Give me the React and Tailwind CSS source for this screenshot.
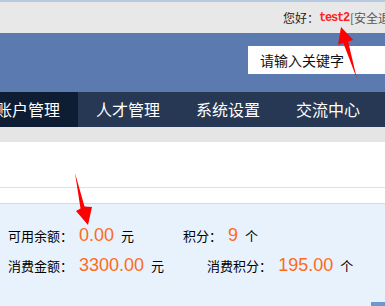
const cjk = { fontFamily: '"Noto Sans CJK SC", "Liberation Sans", sans-serif' }
const num = { fontFamily: '"Liberation Sans", Arial, sans-serif' }

const NAV = ['账户管理', '人才管理', '系统设置', '交流中心']

function Arrows() {
  return (
    <svg className="absolute left-0 top-0 pointer-events-none" width="385" height="306" viewBox="0 0 385 306">
      <polygon fill="#ff0000" points="341,27 353.3,40 348.1,41.6 357,79 343.3,43 338.1,44.7" />
      <polygon fill="#ff0000" points="75,173 84.5,206.5 92,207 88,225 76,211 80.5,208.5" />
    </svg>
  )
}

function Stat({ label, value, unit, ml = 0 }) {
  return (
    <div className="flex items-baseline" style={{ marginLeft: ml }}>
      <span className="text-[13px] text-black" style={cjk}>{label}</span>
      <span className="text-[18px] text-[#ff6a1a] ml-[6px]" style={num}>{value}</span>
      <span className="text-[13px] text-black ml-[7px]" style={cjk}>{unit}</span>
    </div>
  )
}

export default function App() {
  return (
    <div className="relative w-[385px] h-[306px] overflow-hidden bg-white flex flex-col" style={cjk}>
      <div className="h-[33px] shrink-0 border-t-2 border-[#b5c9e3] bg-[#e8e8e8] flex items-center pl-[283px] whitespace-nowrap">
        <span className="text-[12px] text-[#222]">您好：</span>
        <span className="text-[12px] font-bold text-[#ff2020] tracking-[-1.2px]" style={{ fontFamily: '"Liberation Mono", monospace' }}>test2</span>
        <span className="text-[12px] text-[#555] ml-[1px]">[安全退出]</span>
      </div>

      <div className="h-[59px] shrink-0 bg-[#5a7ab0] pt-[13px] pl-[248px]">
        <div className="w-[150px] h-[28px] bg-white pl-[12px] flex items-center text-[14px] text-[#111] whitespace-nowrap">
          请输入关键字
        </div>
      </div>

      <div className="h-[35px] shrink-0 bg-[#263853] flex ml-[-22px] whitespace-nowrap">
        {NAV.map((item, i) => (
          <div key={item} className={`px-[18px] leading-[35px] text-[16px] text-white ${i === 0 ? 'bg-[#0e1c34]' : ''}`}>
            {item}
          </div>
        ))}
      </div>

      <div className="h-[15px] shrink-0 bg-[#e5e5e5]" />
      <div className="h-[46px] shrink-0 bg-white border-b border-[#e1e1e1]" />
      <div className="h-[15px] shrink-0 bg-white" />

      <div className="flex-1 bg-[#e8f2fd] border-t border-[#c8dcf2] pt-[18px] pl-[8px] relative">
        <div className="h-[30px] flex items-baseline whitespace-nowrap">
          <Stat label="可用余额：" value="0.00" unit="元" />
          <Stat label="积分：" value="9" unit="个" ml={49} />
        </div>
        <div className="h-[30px] flex items-baseline whitespace-nowrap">
          <Stat label="消费金额：" value="3300.00" unit="元" />
          <Stat label="消费积分：" value="195.00" unit="个" ml={43} />
        </div>
        <div className="absolute right-0 bottom-0 w-[14px] h-[4px] bg-[#6a9acd]" />
      </div>

      <Arrows />
    </div>
  )
}
